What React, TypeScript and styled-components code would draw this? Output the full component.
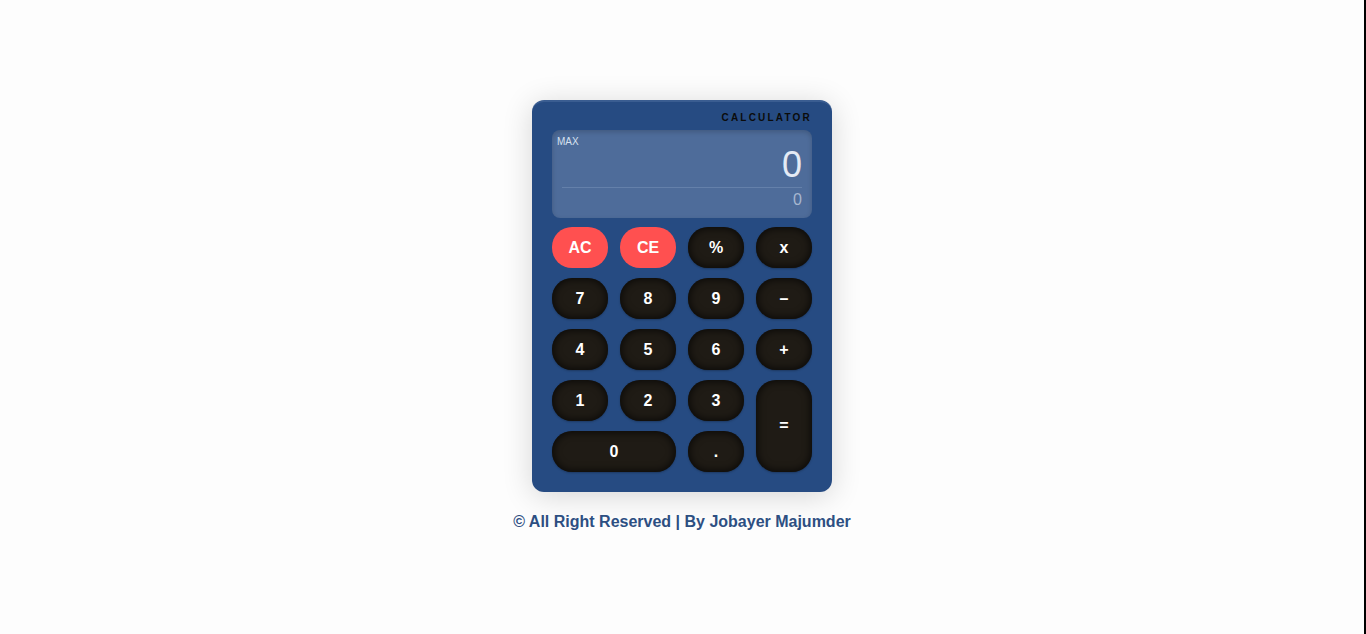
import React from "react";
import styled, { createGlobalStyle } from "styled-components";

const Global = createGlobalStyle`
  html, body { margin: 0; padding: 0; background: #fdfdfd; }
  * { box-sizing: border-box; }
`;

const Page = styled.div`
  min-height: 634px;
  border-right: 2px solid #000;
  display: flex;
  flex-direction: column;
  align-items: center;
  padding-top: 100px;
  font-family: "Liberation Sans", Arial, sans-serif;
`;

const Body = styled.div`
  width: 300px;
  background: #264b82;
  border-radius: 12px;
  border-top: 2px solid #3a5d91;
  padding: 8px 20px 20px;
  box-shadow: 0 4px 30px rgba(0, 0, 0, 0.16);
`;

const Brand = styled.div`
  text-align: right;
  font-size: 10px;
  font-weight: 600;
  letter-spacing: 2.2px;
  color: #0b0b0b;
  height: 20px;
  line-height: 16px;
`;

const Screen = styled.div`
  position: relative;
  height: 88px;
  border-radius: 8px;
  background: #4e6c9a;
  box-shadow: inset 0 2px 5px rgba(0, 0, 0, 0.18);
  padding: 15px 10px 0;
  display: flex;
  flex-direction: column;
  align-items: stretch;
`;

const Max = styled.span`
  position: absolute;
  top: 6px;
  left: 5px;
  font-size: 10px;
  color: #d6e0ef;
`;

const Main = styled.div`
  text-align: right;
  font-size: 36px;
  line-height: 40px;
  color: #e4eaf4;
  padding-bottom: 2px;
  border-bottom: 1px solid #6480aa;
`;

const Sub = styled.div`
  text-align: right;
  font-size: 16px;
  line-height: 24px;
  color: #a7b7d0;
`;

const Keys = styled.div`
  margin-top: 9px;
  display: grid;
  grid-template-columns: repeat(4, 56px);
  grid-auto-rows: 41px;
  gap: 10px 12px;
`;

const Key = styled.button<{ $red?: boolean; $wide?: boolean; $tall?: boolean }>`
  border: none;
  border-radius: 20px;
  font-family: "Liberation Sans", Arial, sans-serif;
  font-weight: 700;
  font-size: 16px;
  color: #fff;
  padding: 0;
  cursor: pointer;
  grid-column: ${(p) => (p.$wide ? "span 2" : "auto")};
  grid-row: ${(p) => (p.$tall ? "span 2" : "auto")};
  background: ${(p) => (p.$red ? "#ff5050" : "#1f1b15")};
  box-shadow: ${(p) =>
    p.$red
      ? "none"
      : "inset 0 0 7px 2px rgba(0,0,0,0.6), 0 1px 2px rgba(0,0,0,0.25)"};
`;

const Footer = styled.p`
  margin: 21px 0 0;
  font-size: 16px;
  font-weight: 700;
  color: #2d4f82;
`;

const keys: { label: string; red?: boolean; wide?: boolean; tall?: boolean }[] = [
  { label: "AC", red: true },
  { label: "CE", red: true },
  { label: "%" },
  { label: "x" },
  { label: "7" },
  { label: "8" },
  { label: "9" },
  { label: "–" },
  { label: "4" },
  { label: "5" },
  { label: "6" },
  { label: "+" },
  { label: "1" },
  { label: "2" },
  { label: "3" },
  { label: "=", tall: true },
  { label: "0", wide: true },
  { label: "." },
];

export default function App() {
  return (
    <>
      <Global />
      <Page>
        <Body>
          <Brand>CALCULATOR</Brand>
          <Screen>
            <Max>MAX</Max>
            <Main>0</Main>
            <Sub>0</Sub>
          </Screen>
          <Keys>
            {keys.map((k) => (
              <Key key={k.label} $red={k.red} $wide={k.wide} $tall={k.tall}>
                {k.label}
              </Key>
            ))}
          </Keys>
        </Body>
        <Footer>© All Right Reserved | By Jobayer Majumder</Footer>
      </Page>
    </>
  );
}
